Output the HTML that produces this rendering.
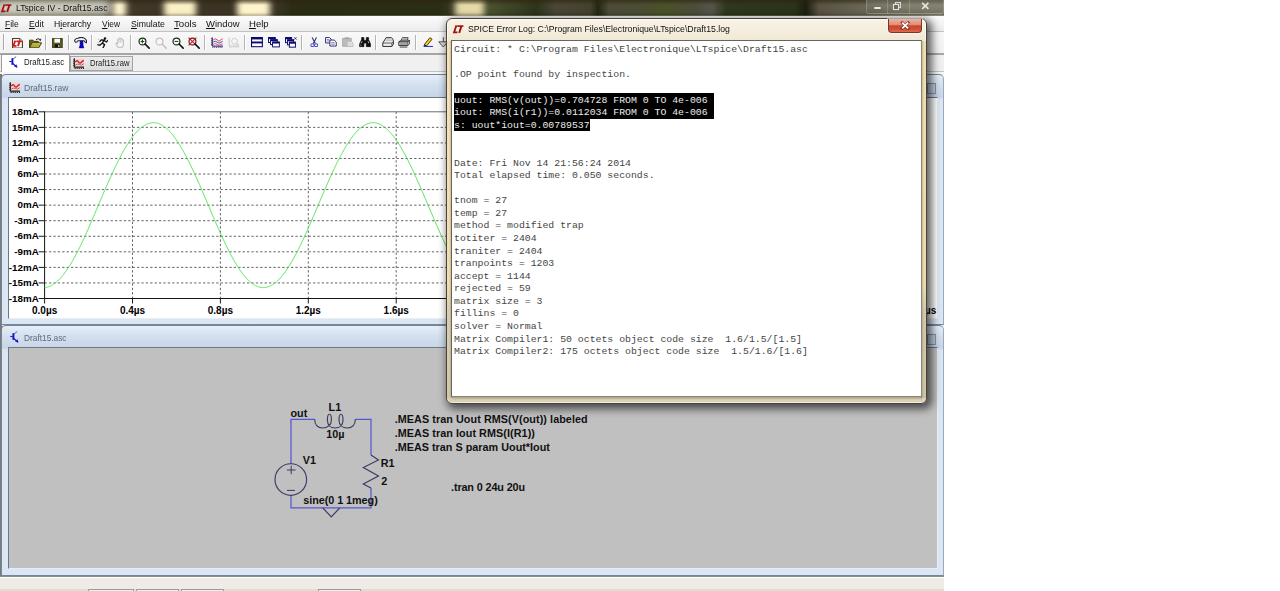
<!DOCTYPE html>
<html><head><meta charset="utf-8"><title>LTspice IV - Draft15.asc</title>
<style>
html,body{margin:0;padding:0;background:#fff;}
body{width:1280px;height:591px;position:relative;overflow:hidden;font-family:"Liberation Sans",sans-serif;}
.t{position:absolute;white-space:pre;font-family:"Liberation Sans",sans-serif;}
.abs{position:absolute;}
#app{position:absolute;left:0;top:0;width:944px;height:591px;background:#f0f0f0;overflow:hidden;}
#title{position:absolute;left:0;top:0;width:945px;height:16px;overflow:hidden;
 background:linear-gradient(90deg,#74725f 0px,#4c4636 108px,#3e3626 140px,#3a3222 230px,#3a3424 276px,#2b2d13 292px,#2a2e13 440px,#3b3b28 456px,#48502f 492px,#2e341b 536px,#4a4636 556px,#45412f 590px,#24280f 598px,#4c4c38 609px,#4b4d33 640px,#4a5228 666px,#4c4c3c 695px,#55554a 712px,#2f381c 726px,#2a3418 795px,#1c1e10 806px,#5a5244 819px,#676553 862px,#777565 900px,#7c7a68 944px);}
#menubar{position:absolute;left:0;top:16px;width:945px;height:16px;background:linear-gradient(#fcfcfc,#f4f4f4 50%,#ebebeb);border-bottom:1px solid #c2c2c2;box-sizing:border-box;}
#toolbar{position:absolute;left:0;top:32px;width:945px;height:23px;background:linear-gradient(#f8f8f8,#f1f1f1);border-bottom:2px solid #a6a6a6;box-sizing:border-box;}
#tabbar{position:absolute;left:0;top:55px;width:945px;height:19px;background:#f0f0f0;}
#mdi{position:absolute;left:0;top:74px;width:945px;height:503px;background:#f2f2f2;border-left:2px solid #7a7a7a;box-sizing:border-box;}
#status{position:absolute;left:0;top:577px;width:945px;height:14px;background:#efece8;border-top:1px solid #fff;box-sizing:border-box;}
.child{position:absolute;left:1px;width:942.5px;border:1px solid #76859a;border-right-color:#9ca8b8;border-radius:5px 5px 0 0;box-sizing:border-box;
 background:linear-gradient(#e6eef8 0px,#d4e0ef 10px,#c7d5e7 22px,#dae6f3 24px);}
.sep{position:absolute;top:35px;width:1px;height:15px;background:#b4b4b4;border-right:1px solid #fff;}
</style></head>
<body>
<div id="app">
<div id="title">
<div class="abs" style="left:113px;top:-2px;width:13px;height:20px;background:#fff6d2;opacity:1.00;filter:blur(3px);"></div>
<div class="abs" style="left:164px;top:-2px;width:32px;height:20px;background:#fbefc6;opacity:1.00;filter:blur(3px);"></div>
<div class="abs" style="left:237px;top:-2px;width:33px;height:20px;background:#fff4cc;opacity:1.00;filter:blur(3px);"></div>
<div class="abs" style="left:455px;top:-2px;width:29px;height:20px;background:#f0e2b0;opacity:0.95;filter:blur(3px);"></div>
<div class="abs" style="left:0;top:0;width:945px;height:16px;background:linear-gradient(rgba(45,35,15,.62) 0,rgba(45,35,15,.4) 2px,rgba(45,35,15,0) 5px,rgba(0,0,0,0) 80%,rgba(10,10,0,.12) 93%,rgba(200,200,190,.45) 100%);"></div>
<div class="abs" style="left:-6px;top:0px;width:118px;height:15px;background:#e6e6da;opacity:.85;filter:blur(4px);border-radius:7px;"></div>
<svg class="abs" style="left:0px;top:3.6px" width="12" height="9" viewBox="0 0 12 9"><path d="M4.4 0.4 L2 7.4 H5.4" fill="none" stroke="#a31212" stroke-width="1.7"/><path d="M5.2 1.1 H11.4" stroke="#a31212" stroke-width="1.6"/><path d="M9.4 1.1 L7.2 8" stroke="#a31212" stroke-width="1.9"/></svg>
<div class="t " style="left:16.00px;top:0.65px;font-size:9.80px;line-height:14.70px;transform-origin:0 0;transform:scaleX(0.8857);color:#111;">LTspice IV - Draft15.asc</div>
<div class="abs" style="left:866px;top:0;width:78px;height:14px;border:1px solid rgba(200,200,185,.3);border-top:none;border-radius:0 0 3px 3px;box-sizing:border-box;background:linear-gradient(rgba(255,255,255,.16),rgba(255,255,255,.06) 50%,rgba(0,0,0,.05));"></div>
<div class="abs" style="left:887px;top:0;width:1px;height:14px;background:rgba(210,210,195,.28);"></div>
<div class="abs" style="left:909px;top:0;width:1px;height:14px;background:rgba(210,210,195,.28);"></div>
<div class="abs" style="left:874px;top:6.5px;width:7px;height:2.5px;background:#ecece6;box-shadow:0 0 1px #333;border-radius:1px;"></div>
<svg class="abs" style="left:890.5px;top:1px" width="12" height="11" viewBox="0 0 12 11"><rect x="4.5" y="1.5" width="5" height="5" fill="none" stroke="#d8d8d2" stroke-width="1.1"/><rect x="2.5" y="3.5" width="5" height="5" fill="#66665a" stroke="#e6e6e0" stroke-width="1.1"/></svg>
<svg class="abs" style="left:919.5px;top:1px" width="11" height="10" viewBox="0 0 11 10"><path d="M2.2 1.9 L8.4 7.9 M8.4 1.9 L2.2 7.9" stroke="#e6e6e0" stroke-width="1.6"/></svg>
</div>
<div id="menubar"></div>
<div class="t " style="left:5.30px;top:16.95px;font-size:9.80px;line-height:14.70px;transform-origin:0 0;transform:scaleX(0.8675);color:#111;"><u>F</u>ile</div>
<div class="t " style="left:28.80px;top:16.95px;font-size:9.80px;line-height:14.70px;transform-origin:0 0;transform:scaleX(0.8764);color:#111;"><u>E</u>dit</div>
<div class="t " style="left:54.20px;top:16.95px;font-size:9.80px;line-height:14.70px;transform-origin:0 0;transform:scaleX(0.8871);color:#111;">H<u>i</u>erarchy</div>
<div class="t " style="left:102.10px;top:16.95px;font-size:9.80px;line-height:14.70px;transform-origin:0 0;transform:scaleX(0.8592);color:#111;"><u>V</u>iew</div>
<div class="t " style="left:130.50px;top:16.95px;font-size:9.80px;line-height:14.70px;transform-origin:0 0;transform:scaleX(0.8891);color:#111;"><u>S</u>imulate</div>
<div class="t " style="left:173.80px;top:16.95px;font-size:9.80px;line-height:14.70px;transform-origin:0 0;transform:scaleX(0.9878);color:#111;"><u>T</u>ools</div>
<div class="t " style="left:205.80px;top:16.95px;font-size:9.80px;line-height:14.70px;transform-origin:0 0;transform:scaleX(0.9640);color:#111;"><u>W</u>indow</div>
<div class="t " style="left:248.80px;top:16.95px;font-size:9.80px;line-height:14.70px;transform-origin:0 0;transform:scaleX(0.9724);color:#111;"><u>H</u>elp</div>
<div id="toolbar"></div>
<div class="abs" style="left:3px;top:34px;width:1px;height:16px;background:#a8a8a8;border-right:1px solid #fff;"></div>
<div class="sep" style="left:45px"></div>
<div class="sep" style="left:68px"></div>
<div class="sep" style="left:91px"></div>
<div class="sep" style="left:130px"></div>
<div class="sep" style="left:204px"></div>
<div class="sep" style="left:244px"></div>
<div class="sep" style="left:301px"></div>
<div class="sep" style="left:375px"></div>
<div class="sep" style="left:415px"></div>
<svg class="abs" style="left:12px;top:37.6px" width="11.16" height="10.60" viewBox="0 0 12 11.4" preserveAspectRatio="none"><path d="M0.6 0.6 H8.2 L11.2 3.6 V10.8 H0.6 Z" fill="#fff" stroke="#4a3c28" stroke-width="1.2"/><path d="M8.2 0.6 V3.6 H11.2" fill="#e8d8d0" stroke="#4a3c28" stroke-width="0.8"/><path d="M3.6 2.8 L1.4 8.4 H4.8" fill="none" stroke="#dc1414" stroke-width="1.9"/><path d="M4.6 3.6 H10.2" stroke="#dc1414" stroke-width="1.8"/><path d="M8.2 3.6 L6.4 8.8" stroke="#dc1414" stroke-width="2"/></svg>
<svg class="abs" style="left:29px;top:37.8px" width="13.20" height="10.60" viewBox="0 0 13.2 10.6" preserveAspectRatio="none"><path d="M0.6 9.8 V2.2 H4 L5 3.4 H9.4 V5" fill="#66661a" stroke="#3e3e10" stroke-width="1"/><path d="M0.6 9.8 L3 4.8 H12.6 L9.8 9.8 Z" fill="#b2aa3a" stroke="#45450f" stroke-width="1"/><path d="M3.6 5.8 H11" stroke="#d8d268" stroke-width="0.9"/><path d="M6.8 2 Q9 -0.4 11.2 1.6" fill="none" stroke="#2a2a2a" stroke-width="1"/><path d="M12.4 0.4 L11.9 3.1 L9.7 1.9 Z" fill="#2a2a2a"/></svg>
<svg class="abs" style="left:52px;top:37.6px" width="11.16" height="10.23" viewBox="0 0 12 11" preserveAspectRatio="none"><rect x="0.6" y="0.6" width="10.4" height="9.8" fill="#5c5c22" stroke="#3a3a14" stroke-width="1"/><rect x="2.6" y="0.8" width="6" height="4.2" fill="#fff"/><rect x="3" y="6.8" width="5.4" height="3.4" fill="#111"/><rect x="6.6" y="7.4" width="1.4" height="2.4" fill="#c8c8c8"/></svg>
<svg class="abs" style="left:73.5px;top:37.4px" width="13.58" height="11.53" viewBox="0 0 14.6 12.4" preserveAspectRatio="none"><path d="M1.6 5.6 Q0.2 4.4 1 3 Q2.2 1.4 4.4 1.4 Q7.4 -0.4 11 1.2 Q14 2.8 13.6 6.2 L12 6 Q12.2 4.4 10.4 4 L4.6 4 Q3.2 4 3.4 5.4 Z" fill="#f8f8f8" stroke="#1e1e2c" stroke-width="1.1" stroke-linejoin="round"/><path d="M6.6 4.4 H9.6 L9.8 9 L10.6 11.8 H5.6 L6.4 9 Z" fill="#0808c4" stroke="#000078" stroke-width="0.5"/></svg>
<svg class="abs" style="left:97px;top:37.1px" width="11.16" height="11.16" viewBox="0 0 12 12" preserveAspectRatio="none"><circle cx="8.6" cy="1.6" r="1.3" fill="#111"/><path d="M8 3 L5.6 6.6 L8.2 8.2 L6.6 11.4 M5.6 6.6 L3.4 8.6 L0.8 8.4 M8 3.4 L4.6 3 L3.2 4.8 M7.6 3.8 L10.2 5.4 L11.4 3.8" fill="none" stroke="#111" stroke-width="1.4" stroke-linecap="round" stroke-linejoin="round"/><path d="M1 2.2 L2.6 3 M0.6 5.8 L2 5.6" stroke="#999" stroke-width="0.7"/></svg>
<svg class="abs" style="left:114.5px;top:37.1px" width="11.16" height="11.16" viewBox="0 0 12 12" preserveAspectRatio="none"><path d="M3 11 L1 7.4 Q0.6 6.2 1.8 6.4 L3 7.6 V2.6 Q3.6 1.6 4.4 2.6 V1.6 Q5.2 0.6 6 1.6 V1.8 Q6.8 1 7.6 2 V2.8 Q8.6 2.2 9 3.2 V8 Q9 10 8 11 Z" fill="#f6f6f6" stroke="#adadad" stroke-width="0.95"/><path d="M4.4 2.6 V6 M6 1.8 V6 M7.6 2.4 V6" stroke="#bcbcbc" stroke-width="0.7"/></svg>
<svg class="abs" style="left:138px;top:36.9px" width="12.09" height="12.09" viewBox="0 0 13 13" preserveAspectRatio="none"><circle cx="4.8" cy="4.8" r="3.7" fill="#f8f8f8" stroke="#1c2c1c" stroke-width="1.3"/><path d="M2.8 4.8 H6.8 M4.8 2.8 V6.8" stroke="#0a5a0a" stroke-width="1.2"/><path d="M7.6 7.6 L12 12" stroke="#111" stroke-width="1.7" stroke-linecap="round"/></svg>
<svg class="abs" style="left:155px;top:36.9px" width="12.09" height="12.09" viewBox="0 0 13 13" preserveAspectRatio="none"><circle cx="4.8" cy="4.8" r="3.7" fill="#f8f8f8" stroke="#c0c0c0" stroke-width="1.3"/><path d="M7.6 7.6 L12 12" stroke="#c4c4c4" stroke-width="1.7" stroke-linecap="round"/></svg>
<svg class="abs" style="left:171.5px;top:36.9px" width="12.09" height="12.09" viewBox="0 0 13 13" preserveAspectRatio="none"><circle cx="4.8" cy="4.8" r="3.7" fill="#f8f8f8" stroke="#1c2c1c" stroke-width="1.3"/><path d="M2.8 4.8 H6.8" stroke="#0a5a0a" stroke-width="1.2"/><path d="M7.6 7.6 L12 12" stroke="#111" stroke-width="1.7" stroke-linecap="round"/></svg>
<svg class="abs" style="left:188px;top:36.9px" width="12.09" height="12.09" viewBox="0 0 13 13" preserveAspectRatio="none"><circle cx="4.8" cy="4.8" r="3.7" fill="#f8f8f8" stroke="#3c2c2c" stroke-width="1.3"/><path d="M0.6 0.6 L9 9 M9 0.6 L0.6 9" stroke="#e01818" stroke-width="1.3"/><path d="M7.6 7.6 L12 12" stroke="#111" stroke-width="1.7" stroke-linecap="round"/></svg>
<svg class="abs" style="left:210.6px;top:36.7px" width="12.60" height="11.20" viewBox="0 0 14 13" preserveAspectRatio="none"><path d="M1.4 0.5 V10.6 H13.4" fill="none" stroke="#101060" stroke-width="1.1"/><path d="M1.6 12 H13.2" stroke="#101060" stroke-width="1" stroke-dasharray="1 1"/><path d="M0 2 H1.4 M0 4.4 H1.4 M0 6.8 H1.4 M0 9 H1.4" stroke="#101060" stroke-width="0.8"/><path d="M2.4 3.6 Q4.6 0.4 6.8 3.4 T11.2 3.2 L13 2" fill="none" stroke="#e03030" stroke-width="1"/><path d="M2.4 6 Q4.6 3.6 6.8 6 T11.2 6 L13 5" fill="none" stroke="#3030d0" stroke-width="1"/><path d="M2.4 8.6 Q4.6 6.6 6.8 8.6 T11.2 8.6 L13 7.8" fill="none" stroke="#e03030" stroke-width="0.9"/></svg>
<svg class="abs" style="left:228px;top:36.9px" width="12.00" height="11.20" viewBox="0 0 14 13" preserveAspectRatio="none"><path d="M1.4 0.5 V10.6 H13" fill="none" stroke="#c4c4c8" stroke-width="1.1"/><path d="M1.6 12 H13" stroke="#cacace" stroke-width="1" stroke-dasharray="1 1"/><circle cx="7.6" cy="5" r="3.4" fill="none" stroke="#c8c8cc" stroke-width="1"/><path d="M10 7.6 L12.4 10" stroke="#c4c4c8" stroke-width="1.3"/></svg>
<svg class="abs" style="left:251px;top:37.2px" width="11.90" height="10.40" viewBox="0 0 13 12" preserveAspectRatio="none"><rect x="0.6" y="0.6" width="11.8" height="10.6" fill="#fff" stroke="#0a0a70" stroke-width="1.2"/><rect x="0.6" y="0.6" width="11.8" height="2.2" fill="#0a0a70"/><rect x="0.6" y="5.2" width="11.8" height="2.2" fill="#0a0a70"/></svg>
<svg class="abs" style="left:268px;top:37px" width="11.90" height="10.60" viewBox="0 0 14 12" preserveAspectRatio="none"><rect x="0.6" y="0.6" width="8" height="5.6" fill="#fff" stroke="#0a0a70" stroke-width="1.1"/><rect x="0.6" y="0.6" width="8" height="1.8" fill="#0a0a70"/><rect x="3" y="3" width="8" height="5.6" fill="#fff" stroke="#0a0a70" stroke-width="1.1"/><rect x="3" y="3" width="8" height="1.8" fill="#0a0a70"/><rect x="5.4" y="5.6" width="8" height="5.6" fill="#fff" stroke="#0a0a70" stroke-width="1.1"/><rect x="5.4" y="5.6" width="8" height="1.8" fill="#0a0a70"/></svg>
<svg class="abs" style="left:285px;top:36.7px" width="12.20" height="10.90" viewBox="0 0 14 12" preserveAspectRatio="none"><rect x="0.6" y="0.6" width="7" height="5.6" fill="#fff" stroke="#0a0a70" stroke-width="1.1"/><rect x="0.6" y="0.6" width="7" height="1.8" fill="#0a0a70"/><rect x="2.8" y="3" width="7" height="5.6" fill="#fff" stroke="#0a0a70" stroke-width="1.1"/><rect x="2.8" y="3" width="7" height="1.8" fill="#0a0a70"/><rect x="5" y="5.6" width="7" height="5.6" fill="#fff" stroke="#0a0a70" stroke-width="1.1"/><rect x="5" y="5.6" width="7" height="1.8" fill="#0a0a70"/><path d="M10.6 0.3 L13.2 2.9 M13.2 0.3 L10.6 2.9" stroke="#222" stroke-width="0.9"/></svg>
<svg class="abs" style="left:309.6px;top:37.1px" width="8.60" height="10.20" viewBox="0 0 9 11" preserveAspectRatio="none"><path d="M2.2 0.4 L5.6 7 M6.8 0.4 L3.4 7" stroke="#282868" stroke-width="1.15" fill="none"/><ellipse cx="2.6" cy="8.8" rx="1.7" ry="1.6" fill="none" stroke="#5050d0" stroke-width="1.1"/><ellipse cx="6.4" cy="8.8" rx="1.7" ry="1.6" fill="none" stroke="#5050d0" stroke-width="1.1"/></svg>
<svg class="abs" style="left:325.2px;top:37.4px" width="12.20" height="9.60" viewBox="0 0 13 10.6" preserveAspectRatio="none"><path d="M0.6 0.6 H4.8 L6.6 2.4 V6.6 H0.6 Z" fill="#fff" stroke="#242464" stroke-width="1"/><path d="M1.8 2.8 H4.6 M1.8 4.4 H5.2" stroke="#44449a" stroke-width="0.7"/><path d="M5.2 3.4 H9.8 L12 5.6 V10 H5.2 Z" fill="#fff" stroke="#242464" stroke-width="1"/><path d="M6.6 6.2 H10.2 M6.6 7.9 H10.4" stroke="#44449a" stroke-width="0.7"/></svg>
<svg class="abs" style="left:342.2px;top:37.3px" width="11.60" height="10.00" viewBox="0 0 12 10.6" preserveAspectRatio="none"><rect x="0.7" y="1.4" width="8.8" height="8.4" fill="#bdbdbd" stroke="#a6a6a6" stroke-width="0.9"/><rect x="2.8" y="0.3" width="4.6" height="2.2" fill="#a8a8a8"/><path d="M5.4 4.6 H9.6 L11.4 6.4 V10.2 H5.4 Z" fill="#e6e6e6" stroke="#b2b2b2" stroke-width="0.8"/><path d="M6.6 7 H9.8 M6.6 8.6 H10" stroke="#c6c6c6" stroke-width="0.6"/></svg>
<svg class="abs" style="left:359px;top:37.4px" width="12.20" height="10.40" viewBox="0 0 13 11" preserveAspectRatio="none"><path d="M2.8 0.6 H5.2 V2.6 L5.8 3.6 H7.2 L7.8 2.6 V0.6 H10.2 V2.6 L12.4 7.6 V10.2 H7.8 V6.4 H5.2 V10.2 H0.6 V7.6 L2.8 2.6 Z" fill="#0c0c0c" stroke="#0c0c0c" stroke-width="0.7" stroke-linejoin="round"/><path d="M2 8 V9.4 M3.4 4.4 L2.4 6.8 M9.6 4.4 L10.4 6.6" stroke="#f0f0f0" stroke-width="0.7"/></svg>
<svg class="abs" style="left:382px;top:37.4px" width="12.20" height="10.40" viewBox="0 0 13 11" preserveAspectRatio="none"><path d="M4.4 0.7 H10 Q12.4 2 12.2 5 V7.4 L10.4 10 H0.8 V6.4 Z" fill="#ececec" stroke="#242424" stroke-width="1" stroke-linejoin="round"/><path d="M0.8 6.4 H10.6 L12.2 4.6 M10.6 6.4 V10" fill="none" stroke="#333" stroke-width="0.8"/><path d="M4.8 2.2 H10 M4 3.6 H10.6" stroke="#9a9a9a" stroke-width="0.6"/></svg>
<svg class="abs" style="left:398.4px;top:37px" width="12.20" height="10.80" viewBox="0 0 13 11.4" preserveAspectRatio="none"><path d="M3.4 3.4 L4.8 0.6 H10.8 L9.8 3.4" fill="#fff" stroke="#222" stroke-width="0.8"/><path d="M5.4 1.6 H9.6 M4.8 2.6 H9.4" stroke="#666" stroke-width="0.5"/><path d="M0.8 5.2 L3 3.4 H12.2 L10.4 5.2 Z" fill="#d0d0d0" stroke="#222" stroke-width="0.8" stroke-linejoin="round"/><path d="M0.8 5.2 H10.4 V9 H0.8 Z" fill="#e8e8e8" stroke="#222" stroke-width="0.9"/><path d="M10.4 5.2 L12.2 3.4 V7.2 L10.4 9" fill="#bdbdbd" stroke="#222" stroke-width="0.8" stroke-linejoin="round"/><path d="M1.6 6.6 H9.6 M1.6 7.8 H9.6" stroke="#555" stroke-width="0.6"/><path d="M1.8 10.6 H10" stroke="#333" stroke-width="1"/></svg>
<svg class="abs" style="left:422.6px;top:37px" width="10.60" height="10.20" viewBox="0 0 11 10.6" preserveAspectRatio="none"><path d="M1.6 7.6 L7.2 0.7 L9.4 2.3 L3.8 9.2 L1.2 9.8 Z" fill="#f2d414" stroke="#2a2410" stroke-width="0.9" stroke-linejoin="round"/><path d="M1.6 7.6 L3.8 9.2 L1.2 9.8 Z" fill="#1a1a1a"/><path d="M0.6 9.9 H10.6" stroke="#3434dc" stroke-width="1.2"/></svg>
<svg class="abs" style="left:438px;top:37px" width="11.40" height="10.60" viewBox="0 0 12 11" preserveAspectRatio="none"><path d="M5.6 0.2 V5 M0.8 5 H10.4 L5.6 10.4 Z" fill="#dcdcdc" stroke="#4a4a4a" stroke-width="1"/></svg>
<div id="tabbar"></div>
<div class="abs" style="left:0;top:71px;width:945px;height:1px;background:#c2c2c2;"></div>
<div class="abs" style="left:0;top:72px;width:945px;height:2px;background:#f6f6f6;"></div>
<div class="abs" style="left:1px;top:54px;width:69px;height:18px;background:#fff;border:1px solid #9a9a9a;border-bottom:none;box-sizing:border-box;border-radius:2px 2px 0 0;"></div>
<div class="abs" style="left:70px;top:56px;width:63px;height:15px;background:linear-gradient(#ececec,#dcdcdc);border:1px solid #a4a4a4;box-sizing:border-box;"></div>
<svg class="abs" style="left:8.6px;top:56px" width="9.00" height="12.00" viewBox="0 0 9 12" preserveAspectRatio="none"><path d="M0.3 5.5 H2.8" stroke="#1616c8" stroke-width="1.1"/><path d="M3.4 2.2 V8.8" stroke="#1212c0" stroke-width="1.9"/><path d="M3.8 3.3 L7.2 0.5" stroke="#4848d8" stroke-width="0.95"/><path d="M3.8 7.5 L8 11.2" stroke="#1616c8" stroke-width="1.15"/><path d="M8.4 11.6 L5.2 10.6 L7.4 8.2 Z" fill="#1414c4"/></svg>
<div class="t " style="left:23.70px;top:56.44px;font-size:8.90px;line-height:13.35px;transform-origin:0 0;transform:scaleX(0.8855);color:#1a1a1a;">Draft15.asc</div>
<svg class="abs" style="left:73px;top:58px" width="11.40" height="11.40" viewBox="0 0 12 12" preserveAspectRatio="none"><rect x="1.6" y="0.8" width="10" height="8.6" fill="#ead6d6"/><path d="M1.4 0.2 V9.6 H11.8" fill="none" stroke="#222" stroke-width="1.2"/><path d="M0 2 H1.4 M0 4 H1.4 M0 6 H1.4 M0 8 H1.4" stroke="#222" stroke-width="0.8"/><path d="M1.6 11 H11.6" stroke="#222" stroke-width="1.2" stroke-dasharray="1.2 1"/><path d="M2.4 4.4 Q4.2 1.4 6 4.4 Q7.6 6.6 9.4 3.8 L11.4 2.4" fill="none" stroke="#dc1c1c" stroke-width="1.5"/><path d="M2.4 7.4 Q5 5.6 7 7 T11.4 6" fill="none" stroke="#d05050" stroke-width="1"/></svg>
<div class="t " style="left:89.50px;top:57.04px;font-size:8.90px;line-height:13.35px;transform-origin:0 0;transform:scaleX(0.8587);color:#1a1a1a;">Draft15.raw</div>
<div id="mdi"></div>
<div class="child" style="top:74.4px;height:250.6px;"></div>
<svg class="abs" style="left:9px;top:82px" width="11.40" height="11.40" viewBox="0 0 12 12" preserveAspectRatio="none"><rect x="1.6" y="0.8" width="10" height="8.6" fill="#ead6d6"/><path d="M1.4 0.2 V9.6 H11.8" fill="none" stroke="#222" stroke-width="1.2"/><path d="M0 2 H1.4 M0 4 H1.4 M0 6 H1.4 M0 8 H1.4" stroke="#222" stroke-width="0.8"/><path d="M1.6 11 H11.6" stroke="#222" stroke-width="1.2" stroke-dasharray="1.2 1"/><path d="M2.4 4.4 Q4.2 1.4 6 4.4 Q7.6 6.6 9.4 3.8 L11.4 2.4" fill="none" stroke="#dc1c1c" stroke-width="1.5"/><path d="M2.4 7.4 Q5 5.6 7 7 T11.4 6" fill="none" stroke="#d05050" stroke-width="1"/></svg>
<div class="t " style="left:24.00px;top:81.05px;font-size:9.80px;line-height:14.70px;transform-origin:0 0;transform:scaleX(0.8785);color:#5d6b7c;">Draft15.raw</div>
<div class="abs" style="left:8px;top:97px;width:929.5px;height:222px;background:#fff;border:1px solid #6d7683;border-right-color:#e6edf6;border-bottom-color:#e6edf6;box-sizing:border-box;"></div>
<svg class="abs" style="left:0;top:0" width="944" height="330" viewBox="0 0 944 330"><path d="M44.6 127.36 H923.6" stroke="#484848" stroke-width="0.85" stroke-dasharray="2.3 2.1" fill="none"/><path d="M44.6 142.92 H923.6" stroke="#484848" stroke-width="0.85" stroke-dasharray="2.3 2.1" fill="none"/><path d="M44.6 158.47 H923.6" stroke="#484848" stroke-width="0.85" stroke-dasharray="2.3 2.1" fill="none"/><path d="M44.6 174.03 H923.6" stroke="#484848" stroke-width="0.85" stroke-dasharray="2.3 2.1" fill="none"/><path d="M44.6 189.59 H923.6" stroke="#484848" stroke-width="0.85" stroke-dasharray="2.3 2.1" fill="none"/><path d="M44.6 205.15 H923.6" stroke="#484848" stroke-width="0.85" stroke-dasharray="2.3 2.1" fill="none"/><path d="M44.6 220.71 H923.6" stroke="#484848" stroke-width="0.85" stroke-dasharray="2.3 2.1" fill="none"/><path d="M44.6 236.27 H923.6" stroke="#484848" stroke-width="0.85" stroke-dasharray="2.3 2.1" fill="none"/><path d="M44.6 251.82 H923.6" stroke="#484848" stroke-width="0.85" stroke-dasharray="2.3 2.1" fill="none"/><path d="M44.6 267.38 H923.6" stroke="#484848" stroke-width="0.85" stroke-dasharray="2.3 2.1" fill="none"/><path d="M44.6 282.94 H923.6" stroke="#484848" stroke-width="0.85" stroke-dasharray="2.3 2.1" fill="none"/><path d="M132.50 111.8 V298.5" stroke="#484848" stroke-width="0.85" stroke-dasharray="2.3 2.1" fill="none"/><path d="M220.40 111.8 V298.5" stroke="#484848" stroke-width="0.85" stroke-dasharray="2.3 2.1" fill="none"/><path d="M308.30 111.8 V298.5" stroke="#484848" stroke-width="0.85" stroke-dasharray="2.3 2.1" fill="none"/><path d="M396.20 111.8 V298.5" stroke="#484848" stroke-width="0.85" stroke-dasharray="2.3 2.1" fill="none"/><path d="M484.10 111.8 V298.5" stroke="#484848" stroke-width="0.85" stroke-dasharray="2.3 2.1" fill="none"/><path d="M572.00 111.8 V298.5" stroke="#484848" stroke-width="0.85" stroke-dasharray="2.3 2.1" fill="none"/><path d="M659.90 111.8 V298.5" stroke="#484848" stroke-width="0.85" stroke-dasharray="2.3 2.1" fill="none"/><path d="M747.80 111.8 V298.5" stroke="#484848" stroke-width="0.85" stroke-dasharray="2.3 2.1" fill="none"/><path d="M835.70 111.8 V298.5" stroke="#484848" stroke-width="0.85" stroke-dasharray="2.3 2.1" fill="none"/><path d="M44.60 111.80 H923.60 V298.50" fill="none" stroke="#6c6c6c" stroke-width="1"/><path d="M44.60 111.30 V298.50 H923.60" fill="none" stroke="#151515" stroke-width="1"/><path d="M38.6 111.80 H44.6" stroke="#1a1a1a" stroke-width="1"/><path d="M38.6 127.36 H44.6" stroke="#1a1a1a" stroke-width="1"/><path d="M38.6 142.92 H44.6" stroke="#1a1a1a" stroke-width="1"/><path d="M38.6 158.47 H44.6" stroke="#1a1a1a" stroke-width="1"/><path d="M38.6 174.03 H44.6" stroke="#1a1a1a" stroke-width="1"/><path d="M38.6 189.59 H44.6" stroke="#1a1a1a" stroke-width="1"/><path d="M38.6 205.15 H44.6" stroke="#1a1a1a" stroke-width="1"/><path d="M38.6 220.71 H44.6" stroke="#1a1a1a" stroke-width="1"/><path d="M38.6 236.27 H44.6" stroke="#1a1a1a" stroke-width="1"/><path d="M38.6 251.82 H44.6" stroke="#1a1a1a" stroke-width="1"/><path d="M38.6 267.38 H44.6" stroke="#1a1a1a" stroke-width="1"/><path d="M38.6 282.94 H44.6" stroke="#1a1a1a" stroke-width="1"/><path d="M38.6 298.50 H44.6" stroke="#1a1a1a" stroke-width="1"/><path d="M44.60 298.5 V303.5" stroke="#1a1a1a" stroke-width="1"/><path d="M132.50 298.5 V303.5" stroke="#1a1a1a" stroke-width="1"/><path d="M220.40 298.5 V303.5" stroke="#1a1a1a" stroke-width="1"/><path d="M308.30 298.5 V303.5" stroke="#1a1a1a" stroke-width="1"/><path d="M396.20 298.5 V303.5" stroke="#1a1a1a" stroke-width="1"/><path d="M484.10 298.5 V303.5" stroke="#1a1a1a" stroke-width="1"/><path d="M572.00 298.5 V303.5" stroke="#1a1a1a" stroke-width="1"/><path d="M659.90 298.5 V303.5" stroke="#1a1a1a" stroke-width="1"/><path d="M747.80 298.5 V303.5" stroke="#1a1a1a" stroke-width="1"/><path d="M835.70 298.5 V303.5" stroke="#1a1a1a" stroke-width="1"/><path d="M923.60 298.5 V303.5" stroke="#1a1a1a" stroke-width="1"/><polyline points="44.6,287.6 45.6,287.5 46.6,287.3 47.6,287.0 48.6,286.7 49.6,286.4 50.6,285.9 51.6,285.4 52.6,284.8 53.6,284.2 54.6,283.5 55.6,282.7 56.6,281.9 57.6,281.0 58.6,280.0 59.6,279.0 60.6,278.0 61.6,276.8 62.6,275.6 63.6,274.4 64.6,273.1 65.6,271.7 66.6,270.3 67.6,268.8 68.6,267.3 69.6,265.7 70.6,264.1 71.6,262.4 72.6,260.7 73.6,258.9 74.6,257.1 75.6,255.3 76.6,253.4 77.6,251.5 78.6,249.5 79.6,247.5 80.6,245.5 81.6,243.4 82.6,241.3 83.6,239.2 84.6,237.0 85.6,234.8 86.6,232.6 87.6,230.4 88.6,228.1 89.5,225.9 90.5,223.6 91.5,221.3 92.5,218.9 93.5,216.6 94.5,214.3 95.5,211.9 96.5,209.6 97.5,207.2 98.5,204.9 99.5,202.5 100.5,200.2 101.5,197.8 102.5,195.5 103.5,193.1 104.5,190.8 105.5,188.5 106.5,186.2 107.5,183.9 108.5,181.7 109.5,179.4 110.5,177.2 111.5,175.0 112.5,172.8 113.5,170.7 114.5,168.5 115.5,166.4 116.5,164.4 117.5,162.3 118.5,160.3 119.5,158.4 120.5,156.5 121.5,154.6 122.5,152.7 123.5,150.9 124.5,149.2 125.5,147.5 126.5,145.8 127.5,144.2 128.5,142.7 129.5,141.1 130.5,139.7 131.5,138.3 132.5,136.9 133.5,135.6 134.5,134.4 135.5,133.2 136.5,132.1 137.5,131.0 138.5,130.0 139.5,129.1 140.5,128.2 141.5,127.4 142.5,126.6 143.5,126.0 144.5,125.3 145.5,124.8 146.5,124.3 147.5,123.9 148.5,123.5 149.5,123.2 150.5,123.0 151.5,122.8 152.5,122.7 153.5,122.7 154.5,122.7 155.5,122.8 156.5,123.0 157.5,123.3 158.5,123.6 159.5,123.9 160.5,124.4 161.5,124.9 162.5,125.5 163.5,126.1 164.5,126.8 165.5,127.6 166.5,128.4 167.5,129.3 168.5,130.3 169.5,131.3 170.5,132.3 171.5,133.5 172.5,134.7 173.5,135.9 174.5,137.2 175.5,138.6 176.4,140.0 177.4,141.5 178.4,143.0 179.4,144.6 180.4,146.2 181.4,147.9 182.4,149.6 183.4,151.4 184.4,153.2 185.4,155.0 186.4,156.9 187.4,158.8 188.4,160.8 189.4,162.8 190.4,164.8 191.4,166.9 192.4,169.0 193.4,171.1 194.4,173.3 195.4,175.5 196.4,177.7 197.4,179.9 198.4,182.2 199.4,184.4 200.4,186.7 201.4,189.0 202.4,191.4 203.4,193.7 204.4,196.0 205.4,198.4 206.4,200.7 207.4,203.1 208.4,205.4 209.4,207.8 210.4,210.1 211.4,212.5 212.4,214.8 213.4,217.2 214.4,219.5 215.4,221.8 216.4,224.1 217.4,226.4 218.4,228.6 219.4,230.9 220.4,233.1 221.4,235.3 222.4,237.5 223.4,239.6 224.4,241.8 225.4,243.9 226.4,245.9 227.4,248.0 228.4,250.0 229.4,251.9 230.4,253.8 231.4,255.7 232.4,257.6 233.4,259.4 234.4,261.1 235.4,262.8 236.4,264.5 237.4,266.1 238.4,267.6 239.4,269.2 240.4,270.6 241.4,272.0 242.4,273.4 243.4,274.7 244.4,275.9 245.4,277.1 246.4,278.2 247.4,279.3 248.4,280.3 249.4,281.2 250.4,282.1 251.4,282.9 252.4,283.7 253.4,284.3 254.4,285.0 255.4,285.5 256.4,286.0 257.4,286.4 258.4,286.8 259.4,287.1 260.4,287.3 261.4,287.5 262.4,287.6 263.4,287.6 264.4,287.6 265.3,287.5 266.3,287.3 267.3,287.0 268.3,286.7 269.3,286.4 270.3,285.9 271.3,285.4 272.3,284.8 273.3,284.2 274.3,283.5 275.3,282.7 276.3,281.9 277.3,281.0 278.3,280.0 279.3,279.0 280.3,278.0 281.3,276.8 282.3,275.6 283.3,274.4 284.3,273.1 285.3,271.7 286.3,270.3 287.3,268.8 288.3,267.3 289.3,265.7 290.3,264.1 291.3,262.4 292.3,260.7 293.3,258.9 294.3,257.1 295.3,255.3 296.3,253.4 297.3,251.5 298.3,249.5 299.3,247.5 300.3,245.5 301.3,243.4 302.3,241.3 303.3,239.2 304.3,237.0 305.3,234.8 306.3,232.6 307.3,230.4 308.3,228.1 309.3,225.9 310.3,223.6 311.3,221.3 312.3,218.9 313.3,216.6 314.3,214.3 315.3,211.9 316.3,209.6 317.3,207.2 318.3,204.9 319.3,202.5 320.3,200.2 321.3,197.8 322.3,195.5 323.3,193.1 324.3,190.8 325.3,188.5 326.3,186.2 327.3,183.9 328.3,181.7 329.3,179.4 330.3,177.2 331.3,175.0 332.3,172.8 333.3,170.7 334.3,168.5 335.3,166.4 336.3,164.4 337.3,162.3 338.3,160.3 339.3,158.4 340.3,156.5 341.3,154.6 342.3,152.7 343.3,150.9 344.3,149.2 345.3,147.5 346.3,145.8 347.3,144.2 348.3,142.7 349.3,141.1 350.3,139.7 351.3,138.3 352.2,136.9 353.2,135.6 354.2,134.4 355.2,133.2 356.2,132.1 357.2,131.0 358.2,130.0 359.2,129.1 360.2,128.2 361.2,127.4 362.2,126.6 363.2,126.0 364.2,125.3 365.2,124.8 366.2,124.3 367.2,123.9 368.2,123.5 369.2,123.2 370.2,123.0 371.2,122.8 372.2,122.7 373.2,122.7 374.2,122.7 375.2,122.8 376.2,123.0 377.2,123.3 378.2,123.6 379.2,123.9 380.2,124.4 381.2,124.9 382.2,125.5 383.2,126.1 384.2,126.8 385.2,127.6 386.2,128.4 387.2,129.3 388.2,130.3 389.2,131.3 390.2,132.3 391.2,133.5 392.2,134.7 393.2,135.9 394.2,137.2 395.2,138.6 396.2,140.0 397.2,141.5 398.2,143.0 399.2,144.6 400.2,146.2 401.2,147.9 402.2,149.6 403.2,151.4 404.2,153.2 405.2,155.0 406.2,156.9 407.2,158.8 408.2,160.8 409.2,162.8 410.2,164.8 411.2,166.9 412.2,169.0 413.2,171.1 414.2,173.3 415.2,175.5 416.2,177.7 417.2,179.9 418.2,182.2 419.2,184.4 420.2,186.7 421.2,189.0 422.2,191.4 423.2,193.7 424.2,196.0 425.2,198.4 426.2,200.7 427.2,203.1 428.2,205.4 429.2,207.8 430.2,210.1 431.2,212.5 432.2,214.8 433.2,217.2 434.2,219.5 435.2,221.8 436.2,224.1 437.2,226.4 438.2,228.6 439.2,230.9 440.2,233.1 441.1,235.3 442.1,237.5 443.1,239.6 444.1,241.8 445.1,243.9 446.1,245.9 447.1,248.0 448.1,250.0 449.1,251.9 450.1,253.8 451.1,255.7 452.1,257.6 453.1,259.4 454.1,261.1 455.1,262.8 456.1,264.5 457.1,266.1 458.1,267.6 459.1,269.2 460.1,270.6 461.1,272.0 462.1,273.4 463.1,274.7 464.1,275.9 465.1,277.1 466.1,278.2 467.1,279.3 468.1,280.3 469.1,281.2 470.1,282.1 471.1,282.9 472.1,283.7 473.1,284.3 474.1,285.0 475.1,285.5 476.1,286.0 477.1,286.4 478.1,286.8 479.1,287.1 480.1,287.3 481.1,287.5 482.1,287.6 483.1,287.6 484.1,287.6 485.1,287.5 486.1,287.3 487.1,287.0 488.1,286.7 489.1,286.4 490.1,285.9 491.1,285.4 492.1,284.8 493.1,284.2 494.1,283.5 495.1,282.7 496.1,281.9 497.1,281.0 498.1,280.0 499.1,279.0 500.1,278.0 501.1,276.8 502.1,275.6 503.1,274.4 504.1,273.1 505.1,271.7 506.1,270.3 507.1,268.8 508.1,267.3 509.1,265.7 510.1,264.1 511.1,262.4 512.1,260.7 513.1,258.9 514.1,257.1 515.1,255.3 516.1,253.4 517.1,251.5 518.1,249.5 519.1,247.5 520.1,245.5 521.1,243.4 522.1,241.3 523.1,239.2 524.1,237.0 525.1,234.8 526.1,232.6 527.1,230.4 528.1,228.1 529.0,225.9 530.0,223.6 531.0,221.3 532.0,218.9 533.0,216.6 534.0,214.3 535.0,211.9 536.0,209.6 537.0,207.2 538.0,204.9 539.0,202.5 540.0,200.2 541.0,197.8 542.0,195.5 543.0,193.1 544.0,190.8 545.0,188.5 546.0,186.2 547.0,183.9 548.0,181.7 549.0,179.4 550.0,177.2 551.0,175.0 552.0,172.8 553.0,170.7 554.0,168.5 555.0,166.4 556.0,164.4 557.0,162.3 558.0,160.3 559.0,158.4 560.0,156.5 561.0,154.6 562.0,152.7 563.0,150.9 564.0,149.2 565.0,147.5 566.0,145.8 567.0,144.2 568.0,142.7 569.0,141.1 570.0,139.7 571.0,138.3 572.0,136.9 573.0,135.6 574.0,134.4 575.0,133.2 576.0,132.1 577.0,131.0 578.0,130.0 579.0,129.1 580.0,128.2 581.0,127.4 582.0,126.6 583.0,126.0 584.0,125.3 585.0,124.8 586.0,124.3 587.0,123.9 588.0,123.5 589.0,123.2 590.0,123.0 591.0,122.8 592.0,122.7 593.0,122.7 594.0,122.7 595.0,122.8 596.0,123.0 597.0,123.3 598.0,123.6 599.0,123.9 600.0,124.4 601.0,124.9 602.0,125.5 603.0,126.1 604.0,126.8 605.0,127.6 606.0,128.4 607.0,129.3 608.0,130.3 609.0,131.3 610.0,132.3 611.0,133.5 612.0,134.7 613.0,135.9 614.0,137.2 615.0,138.6 616.0,140.0 616.9,141.5 617.9,143.0 618.9,144.6 619.9,146.2 620.9,147.9 621.9,149.6 622.9,151.4 623.9,153.2 624.9,155.0 625.9,156.9 626.9,158.8 627.9,160.8 628.9,162.8 629.9,164.8 630.9,166.9 631.9,169.0 632.9,171.1 633.9,173.3 634.9,175.5 635.9,177.7 636.9,179.9 637.9,182.2 638.9,184.4 639.9,186.7 640.9,189.0 641.9,191.4 642.9,193.7 643.9,196.0 644.9,198.4 645.9,200.7 646.9,203.1 647.9,205.4 648.9,207.8 649.9,210.1 650.9,212.5 651.9,214.8 652.9,217.2 653.9,219.5 654.9,221.8 655.9,224.1 656.9,226.4 657.9,228.6 658.9,230.9 659.9,233.1 660.9,235.3 661.9,237.5 662.9,239.6 663.9,241.8 664.9,243.9 665.9,245.9 666.9,248.0 667.9,250.0 668.9,251.9 669.9,253.8 670.9,255.7 671.9,257.6 672.9,259.4 673.9,261.1 674.9,262.8 675.9,264.5 676.9,266.1 677.9,267.6 678.9,269.2 679.9,270.6 680.9,272.0 681.9,273.4 682.9,274.7 683.9,275.9 684.9,277.1 685.9,278.2 686.9,279.3 687.9,280.3 688.9,281.2 689.9,282.1 690.9,282.9 691.9,283.7 692.9,284.3 693.9,285.0 694.9,285.5 695.9,286.0 696.9,286.4 697.9,286.8 698.9,287.1 699.9,287.3 700.9,287.5 701.9,287.6 702.9,287.6 703.9,287.6 704.8,287.5 705.8,287.3 706.8,287.0 707.8,286.7 708.8,286.4 709.8,285.9 710.8,285.4 711.8,284.8 712.8,284.2 713.8,283.5 714.8,282.7 715.8,281.9 716.8,281.0 717.8,280.0 718.8,279.0 719.8,278.0 720.8,276.8 721.8,275.6 722.8,274.4 723.8,273.1 724.8,271.7 725.8,270.3 726.8,268.8 727.8,267.3 728.8,265.7 729.8,264.1 730.8,262.4 731.8,260.7 732.8,258.9 733.8,257.1 734.8,255.3 735.8,253.4 736.8,251.5 737.8,249.5 738.8,247.5 739.8,245.5 740.8,243.4 741.8,241.3 742.8,239.2 743.8,237.0 744.8,234.8 745.8,232.6 746.8,230.4 747.8,228.1 748.8,225.9 749.8,223.6 750.8,221.3 751.8,218.9 752.8,216.6 753.8,214.3 754.8,211.9 755.8,209.6 756.8,207.2 757.8,204.9 758.8,202.5 759.8,200.2 760.8,197.8 761.8,195.5 762.8,193.1 763.8,190.8 764.8,188.5 765.8,186.2 766.8,183.9 767.8,181.7 768.8,179.4 769.8,177.2 770.8,175.0 771.8,172.8 772.8,170.7 773.8,168.5 774.8,166.4 775.8,164.4 776.8,162.3 777.8,160.3 778.8,158.4 779.8,156.5 780.8,154.6 781.8,152.7 782.8,150.9 783.8,149.2 784.8,147.5 785.8,145.8 786.8,144.2 787.8,142.7 788.8,141.1 789.8,139.7 790.8,138.3 791.8,136.9 792.7,135.6 793.7,134.4 794.7,133.2 795.7,132.1 796.7,131.0 797.7,130.0 798.7,129.1 799.7,128.2 800.7,127.4 801.7,126.6 802.7,126.0 803.7,125.3 804.7,124.8 805.7,124.3 806.7,123.9 807.7,123.5 808.7,123.2 809.7,123.0 810.7,122.8 811.7,122.7 812.7,122.7 813.7,122.7 814.7,122.8 815.7,123.0 816.7,123.3 817.7,123.6 818.7,123.9 819.7,124.4 820.7,124.9 821.7,125.5 822.7,126.1 823.7,126.8 824.7,127.6 825.7,128.4 826.7,129.3 827.7,130.3 828.7,131.3 829.7,132.3 830.7,133.5 831.7,134.7 832.7,135.9 833.7,137.2 834.7,138.6 835.7,140.0 836.7,141.5 837.7,143.0 838.7,144.6 839.7,146.2 840.7,147.9 841.7,149.6 842.7,151.4 843.7,153.2 844.7,155.0 845.7,156.9 846.7,158.8 847.7,160.8 848.7,162.8 849.7,164.8 850.7,166.9 851.7,169.0 852.7,171.1 853.7,173.3 854.7,175.5 855.7,177.7 856.7,179.9 857.7,182.2 858.7,184.4 859.7,186.7 860.7,189.0 861.7,191.4 862.7,193.7 863.7,196.0 864.7,198.4 865.7,200.7 866.7,203.1 867.7,205.4 868.7,207.8 869.7,210.1 870.7,212.5 871.7,214.8 872.7,217.2 873.7,219.5 874.7,221.8 875.7,224.1 876.7,226.4 877.7,228.6 878.7,230.9 879.6,233.1 880.6,235.3 881.6,237.5 882.6,239.6 883.6,241.8 884.6,243.9 885.6,245.9 886.6,248.0 887.6,250.0 888.6,251.9 889.6,253.8 890.6,255.7 891.6,257.6 892.6,259.4 893.6,261.1 894.6,262.8 895.6,264.5 896.6,266.1 897.6,267.6 898.6,269.2 899.6,270.6 900.6,272.0 901.6,273.4 902.6,274.7 903.6,275.9 904.6,277.1 905.6,278.2 906.6,279.3 907.6,280.3 908.6,281.2 909.6,282.1 910.6,282.9 911.6,283.7 912.6,284.3 913.6,285.0 914.6,285.5 915.6,286.0 916.6,286.4 917.6,286.8 918.6,287.1 919.6,287.3 920.6,287.5 921.6,287.6 922.6,287.6 923.6,287.6" fill="none" stroke="#55e455" stroke-width="0.95"/></svg>
<div class="t " style="left:12.11px;top:104.95px;font-size:9.80px;line-height:14.70px;font-weight:bold;color:#000;">18mA</div>
<div class="t " style="left:12.11px;top:120.51px;font-size:9.80px;line-height:14.70px;font-weight:bold;color:#000;">15mA</div>
<div class="t " style="left:12.11px;top:136.07px;font-size:9.80px;line-height:14.70px;font-weight:bold;color:#000;">12mA</div>
<div class="t " style="left:17.56px;top:151.63px;font-size:9.80px;line-height:14.70px;font-weight:bold;color:#000;">9mA</div>
<div class="t " style="left:17.56px;top:167.19px;font-size:9.80px;line-height:14.70px;font-weight:bold;color:#000;">6mA</div>
<div class="t " style="left:17.56px;top:182.75px;font-size:9.80px;line-height:14.70px;font-weight:bold;color:#000;">3mA</div>
<div class="t " style="left:17.56px;top:198.30px;font-size:9.80px;line-height:14.70px;font-weight:bold;color:#000;">0mA</div>
<div class="t " style="left:14.29px;top:213.86px;font-size:9.80px;line-height:14.70px;font-weight:bold;color:#000;">-3mA</div>
<div class="t " style="left:14.29px;top:229.42px;font-size:9.80px;line-height:14.70px;font-weight:bold;color:#000;">-6mA</div>
<div class="t " style="left:14.29px;top:244.98px;font-size:9.80px;line-height:14.70px;font-weight:bold;color:#000;">-9mA</div>
<div class="t " style="left:8.84px;top:260.54px;font-size:9.80px;line-height:14.70px;font-weight:bold;color:#000;">-12mA</div>
<div class="t " style="left:8.84px;top:276.10px;font-size:9.80px;line-height:14.70px;font-weight:bold;color:#000;">-15mA</div>
<div class="t " style="left:8.84px;top:291.65px;font-size:9.80px;line-height:14.70px;font-weight:bold;color:#000;">-18mA</div>
<div class="t " style="left:31.99px;top:303.04px;font-size:10.00px;line-height:15.00px;font-weight:bold;color:#000;">0.0µs</div>
<div class="t " style="left:119.89px;top:303.04px;font-size:10.00px;line-height:15.00px;font-weight:bold;color:#000;">0.4µs</div>
<div class="t " style="left:207.79px;top:303.04px;font-size:10.00px;line-height:15.00px;font-weight:bold;color:#000;">0.8µs</div>
<div class="t " style="left:295.69px;top:303.04px;font-size:10.00px;line-height:15.00px;font-weight:bold;color:#000;">1.2µs</div>
<div class="t " style="left:383.59px;top:303.04px;font-size:10.00px;line-height:15.00px;font-weight:bold;color:#000;">1.6µs</div>
<div class="t " style="left:471.49px;top:303.04px;font-size:10.00px;line-height:15.00px;font-weight:bold;color:#000;">2.0µs</div>
<div class="t " style="left:559.39px;top:303.04px;font-size:10.00px;line-height:15.00px;font-weight:bold;color:#000;">2.4µs</div>
<div class="t " style="left:647.29px;top:303.04px;font-size:10.00px;line-height:15.00px;font-weight:bold;color:#000;">2.8µs</div>
<div class="t " style="left:735.19px;top:303.04px;font-size:10.00px;line-height:15.00px;font-weight:bold;color:#000;">3.2µs</div>
<div class="t " style="left:823.09px;top:303.04px;font-size:10.00px;line-height:15.00px;font-weight:bold;color:#000;">3.6µs</div>
<div class="t " style="left:910.99px;top:303.04px;font-size:10.00px;line-height:15.00px;font-weight:bold;color:#000;">4.0µs</div>
<div class="child" style="top:325px;height:251px;"></div>
<svg class="abs" style="left:10.4px;top:331.4px" width="9.00" height="12.00" viewBox="0 0 9 12" preserveAspectRatio="none"><path d="M0.3 5.5 H2.8" stroke="#1616c8" stroke-width="1.1"/><path d="M3.4 2.2 V8.8" stroke="#1212c0" stroke-width="1.9"/><path d="M3.8 3.3 L7.2 0.5" stroke="#4848d8" stroke-width="0.95"/><path d="M3.8 7.5 L8 11.2" stroke="#1616c8" stroke-width="1.15"/><path d="M8.4 11.6 L5.2 10.6 L7.4 8.2 Z" fill="#1414c4"/></svg>
<div class="t " style="left:24.00px;top:331.05px;font-size:9.80px;line-height:14.70px;transform-origin:0 0;transform:scaleX(0.8481);color:#5d6b7c;">Draft15.asc</div>
<div class="abs" style="left:8px;top:347px;width:929.5px;height:221.5px;background:#c0c0c0;border:1px solid #6d7683;border-right-color:#e6edf6;border-bottom-color:#e6edf6;box-sizing:border-box;"></div>
<div class="abs" style="left:927px;top:83px;width:9px;height:11px;border:1px solid #8796aa;box-sizing:border-box;background:#c3d0e2;"></div>
<div class="abs" style="left:927px;top:334px;width:9px;height:11px;border:1px solid #8796aa;box-sizing:border-box;background:#c3d0e2;"></div>
<svg class="abs" style="left:0;top:340px" width="945" height="230" viewBox="0 340 945 230"><path d="M291 464 V419.4 H314.7 M355.3 419.4 H371 V455 M371 488 V507.8 H291 V495" fill="none" stroke="#5656d4" stroke-width="1.25"/><path d="M314.7 419.3 C314.7 425 318 428 322.5 428 C327.5 428 331.4 425 331.4 420 C331.4 416 330.6 414.2 329.4 414.2 C328.2 414.2 327.4 416 327.4 420 C327.4 425 330.5 428 335.2 428 C339.9 428 343 425 343 420 C343 416 342.2 414.2 341 414.2 C339.8 414.2 339 416 339 420 C339 425 342.5 428 347.5 428 C352 428 355.3 425 355.3 419.3" fill="none" stroke="#3a3a62" stroke-width="1.15"/><path d="M371 455 L378.5 460 L363.3 467.5 L378.5 476 L363.3 484 L371 488" fill="none" stroke="#3a3a62" stroke-width="1.15"/><circle cx="290.8" cy="479.5" r="15.8" fill="none" stroke="#3a3a62" stroke-width="1.15"/><path d="M287 470 H295.5 M291.2 465.7 V474.2 M287 490.4 H295" stroke="#3a3a62" stroke-width="1" fill="none"/><path d="M322.7 507.8 L331.3 517 L339.8 507.8" fill="none" stroke="#3a3a62" stroke-width="1.15"/></svg>
<div class="t " style="left:290.50px;top:404.96px;font-size:10.80px;line-height:16.20px;font-weight:bold;color:#111;">out</div>
<div class="t " style="left:328.60px;top:399.46px;font-size:10.80px;line-height:16.20px;font-weight:bold;color:#111;">L1</div>
<div class="t " style="left:326.20px;top:425.76px;font-size:10.80px;line-height:16.20px;font-weight:bold;color:#111;">10µ</div>
<div class="t " style="left:302.80px;top:451.76px;font-size:10.80px;line-height:16.20px;font-weight:bold;color:#111;">V1</div>
<div class="t " style="left:380.80px;top:455.46px;font-size:10.80px;line-height:16.20px;font-weight:bold;color:#111;">R1</div>
<div class="t " style="left:381.30px;top:472.96px;font-size:10.80px;line-height:16.20px;font-weight:bold;color:#111;">2</div>
<div class="t " style="left:303.30px;top:491.56px;font-size:10.80px;line-height:16.20px;font-weight:bold;letter-spacing:-0.045px;color:#111;">sine(0 1 1meg)</div>
<div class="t " style="left:394.70px;top:411.16px;font-size:10.80px;line-height:16.20px;font-weight:bold;letter-spacing:0.066px;color:#111;">.MEAS tran Uout RMS(V(out)) labeled</div>
<div class="t " style="left:394.70px;top:425.26px;font-size:10.80px;line-height:16.20px;font-weight:bold;letter-spacing:0.066px;color:#111;">.MEAS tran Iout RMS(I(R1))</div>
<div class="t " style="left:394.70px;top:439.36px;font-size:10.80px;line-height:16.20px;font-weight:bold;letter-spacing:0.017px;color:#111;">.MEAS tran S param Uout*Iout</div>
<div class="t " style="left:451.00px;top:478.96px;font-size:10.80px;line-height:16.20px;font-weight:bold;letter-spacing:-0.109px;color:#111;">.tran 0 24u 20u</div>
<div id="status"></div>
<div class="abs" style="left:0;top:576px;width:945px;height:1px;background:#8c8c8c;"></div>
<div class="abs" style="left:0;top:589px;width:945px;height:2px;background:#e2ddd2;"></div>
<div class="abs" style="left:88px;top:589px;width:46px;height:3px;border:1px solid #9a9a9a;box-sizing:border-box;background:#f0f0f0"></div>
<div class="abs" style="left:136px;top:589px;width:43px;height:3px;border:1px solid #9a9a9a;box-sizing:border-box;background:#f0f0f0"></div>
<div class="abs" style="left:181px;top:589px;width:43px;height:3px;border:1px solid #9a9a9a;box-sizing:border-box;background:#f0f0f0"></div>
<div class="abs" style="left:318px;top:589px;width:43px;height:3px;border:1px solid #9a9a9a;box-sizing:border-box;background:#f0f0f0"></div>
</div>
<div class="abs" id="logwin" style="left:446px;top:18px;width:481px;height:386px;border-radius:6px;box-sizing:border-box;border:1px solid #4a4438;background:linear-gradient(#f8f3e6 0px,#f4eddc 14px,#efe7d3 22px,#eee6d2 300px,#ddd4bb 335px,#d9d0b6 100%);box-shadow:0 0 0 1px rgba(255,255,255,.6) inset,3px 3px 9px 2px rgba(0,0,0,.62);"></div>
<div class="abs" style="left:447px;top:41px;width:4px;height:357px;background:linear-gradient(#f3e3bd 0,#f1ddb2 245px,#d9cfb2 268px,#d3c9ad 100%);"></div>
<div class="abs" style="left:922px;top:41px;width:4px;height:357px;background:linear-gradient(#eddfb4 0,#ebdcae 245px,#d3c9aa 268px,#cdc3a6 100%);"></div>
<div class="abs" style="left:449px;top:41px;width:3px;height:357px;background:linear-gradient(90deg,rgba(140,125,90,0),rgba(140,125,90,.55));"></div>
<div class="abs" style="left:921px;top:41px;width:3px;height:357px;background:linear-gradient(90deg,rgba(140,125,90,.6),rgba(140,125,90,0));"></div>
<div class="abs" style="left:452px;top:397px;width:470px;height:3px;background:linear-gradient(rgba(140,125,90,.6),rgba(140,125,90,0));"></div>
<div class="abs" style="left:451px;top:40px;width:471px;height:357px;background:#fff;border:1px solid #66645c;border-right-color:#8a8678;border-bottom-color:#8a8678;box-sizing:border-box;"></div>
<svg class="abs" style="left:451.6px;top:25.2px" width="12" height="9" viewBox="0 0 12 9"><path d="M4.4 0.4 L2 7.4 H5.4" fill="none" stroke="#981010" stroke-width="1.7"/><path d="M5.2 1.1 H11.4" stroke="#981010" stroke-width="1.6"/><path d="M9.4 1.1 L7.2 8" stroke="#981010" stroke-width="1.9"/></svg>
<div class="t " style="left:467.50px;top:22.15px;font-size:9.80px;line-height:14.70px;transform-origin:0 0;transform:scaleX(0.8880);color:#111;">SPICE Error Log: C:\Program Files\Electronique\LTspice\Draft15.log</div>
<div class="abs" style="left:887.5px;top:19px;width:34.5px;height:13.6px;border:1px solid #7a3428;border-top:none;border-radius:0 0 4px 4px;box-sizing:border-box;background:linear-gradient(#eab4a4 0,#e08c76 45%,#cc4630 52%,#cf4c32 75%,#dc6c50 100%);box-shadow:0 0 0 1px rgba(255,255,255,.5);"></div>
<svg class="abs" style="left:900px;top:21.4px" width="10.4" height="9" viewBox="0 0 11 10"><path d="M2.2 1.8 L8.8 8.2 M8.8 1.8 L2.2 8.2" stroke="#6a2a20" stroke-width="3.2" stroke-linecap="square" opacity=".75"/><path d="M2.2 1.8 L8.8 8.2 M8.8 1.8 L2.2 8.2" stroke="#fff" stroke-width="1.9"/></svg>
<div class="abs" style="left:453.6px;top:93px;width:260.0px;height:25.7px;background:#000;"></div>
<div class="abs" style="left:453.6px;top:118.2px;width:136.1px;height:13.2px;background:#000;"></div>
<div class="t" style="left:454px;top:44.29px;font-family:'Liberation Mono',monospace;font-size:9.83px;line-height:12.58px;color:#454545;">Circuit: * C:\Program Files\Electronique\LTspice\Draft15.asc</div>
<div class="t" style="left:454px;top:69.45px;font-family:'Liberation Mono',monospace;font-size:9.83px;line-height:12.58px;color:#454545;">.OP point found by inspection.</div>
<div class="t" style="left:454px;top:94.61px;font-family:'Liberation Mono',monospace;font-size:9.83px;line-height:12.58px;color:#ececec;">uout: RMS(v(out))=0.704728 FROM 0 TO 4e-006</div>
<div class="t" style="left:454px;top:107.19px;font-family:'Liberation Mono',monospace;font-size:9.83px;line-height:12.58px;color:#ececec;">iout: RMS(i(r1))=0.0112034 FROM 0 TO 4e-006</div>
<div class="t" style="left:454px;top:119.77px;font-family:'Liberation Mono',monospace;font-size:9.83px;line-height:12.58px;color:#ececec;">s: uout*iout=0.00789537</div>
<div class="t" style="left:454px;top:157.51px;font-family:'Liberation Mono',monospace;font-size:9.83px;line-height:12.58px;color:#454545;">Date: Fri Nov 14 21:56:24 2014</div>
<div class="t" style="left:454px;top:170.09px;font-family:'Liberation Mono',monospace;font-size:9.83px;line-height:12.58px;color:#454545;">Total elapsed time: 0.050 seconds.</div>
<div class="t" style="left:454px;top:195.25px;font-family:'Liberation Mono',monospace;font-size:9.83px;line-height:12.58px;color:#454545;">tnom = 27</div>
<div class="t" style="left:454px;top:207.83px;font-family:'Liberation Mono',monospace;font-size:9.83px;line-height:12.58px;color:#454545;">temp = 27</div>
<div class="t" style="left:454px;top:220.41px;font-family:'Liberation Mono',monospace;font-size:9.83px;line-height:12.58px;color:#454545;">method = modified trap</div>
<div class="t" style="left:454px;top:232.99px;font-family:'Liberation Mono',monospace;font-size:9.83px;line-height:12.58px;color:#454545;">totiter = 2404</div>
<div class="t" style="left:454px;top:245.57px;font-family:'Liberation Mono',monospace;font-size:9.83px;line-height:12.58px;color:#454545;">traniter = 2404</div>
<div class="t" style="left:454px;top:258.15px;font-family:'Liberation Mono',monospace;font-size:9.83px;line-height:12.58px;color:#454545;">tranpoints = 1203</div>
<div class="t" style="left:454px;top:270.73px;font-family:'Liberation Mono',monospace;font-size:9.83px;line-height:12.58px;color:#454545;">accept = 1144</div>
<div class="t" style="left:454px;top:283.31px;font-family:'Liberation Mono',monospace;font-size:9.83px;line-height:12.58px;color:#454545;">rejected = 59</div>
<div class="t" style="left:454px;top:295.89px;font-family:'Liberation Mono',monospace;font-size:9.83px;line-height:12.58px;color:#454545;">matrix size = 3</div>
<div class="t" style="left:454px;top:308.47px;font-family:'Liberation Mono',monospace;font-size:9.83px;line-height:12.58px;color:#454545;">fillins = 0</div>
<div class="t" style="left:454px;top:321.05px;font-family:'Liberation Mono',monospace;font-size:9.83px;line-height:12.58px;color:#454545;">solver = Normal</div>
<div class="t" style="left:454px;top:333.63px;font-family:'Liberation Mono',monospace;font-size:9.83px;line-height:12.58px;color:#454545;">Matrix Compiler1: 50 octets object code size  1.6/1.5/[1.5]</div>
<div class="t" style="left:454px;top:346.21px;font-family:'Liberation Mono',monospace;font-size:9.83px;line-height:12.58px;color:#454545;">Matrix Compiler2: 175 octets object code size  1.5/1.6/[1.6]</div>
</body></html>
